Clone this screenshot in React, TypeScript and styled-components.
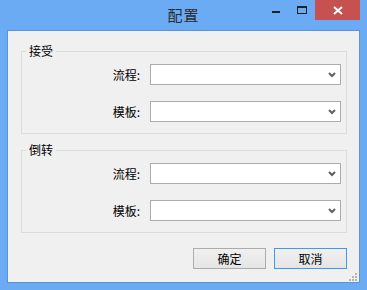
import React from 'react';
import styled, { createGlobalStyle } from "styled-components";

const GlobalStyle = createGlobalStyle`
  html, body { margin: 0; padding: 0; }
  body {
    font-family: "Noto Sans CJK SC", "Liberation Sans", sans-serif;
    font-size: 12px;
    color: #000;
  }
`;

const Window = styled.div`
  width: 367px;
  height: 290px;
  box-sizing: border-box;
  background: #6aabf4;
  display: flex;
  flex-direction: column;
  padding: 0 7px 7px 7px;
`;

const TitleBar = styled.div`
  height: 30px;
  display: grid;
  grid-template-columns: 1fr auto 1fr;
  align-items: start;
  flex-shrink: 0;
`;

const Title = styled.div`
  grid-column: 2;
  font-size: 15px;
  line-height: 30px;
  margin-top: 0px;
  color: #2b2b2b;
  letter-spacing: 1px;
`;

const Controls = styled.div`
  grid-column: 3;
  justify-self: end;
  display: flex;
  height: 20px;
`;

const CtlButton = styled.div<{ $w: number; $close?: boolean }>`
  width: ${p => p.$w}px;
  height: 20px;
  display: flex;
  align-items: center;
  justify-content: center;
  background: ${p => (p.$close ? "#c75050" : "transparent")};
`;

const Frame = styled.div`
  flex: 1;
  border: 1px solid #5a93d8;
  background: #f0f0f0;
  display: flex;
  flex-direction: column;
  padding: 20px 12px 0 13px;
  position: relative;
`;

const Group = styled.div<{ $gap?: number }>`
  border: 1px solid #dcdcdc;
  margin-top: ${p => p.$gap ?? 0}px;
  height: 81px;
`;

const Caption = styled.div`
  width: fit-content;
  margin: -8px 0 0 4px;
  padding: 0 3px;
  background: #f0f0f0;
  line-height: 14px;
  height: 14px;
`;

const Rows = styled.div`
  display: grid;
  grid-template-columns: 1fr 191px;
  column-gap: 10px;
  row-gap: 16px;
  padding: 6px 5px 0 0;
  align-items: center;
`;

const Label = styled.div`
  text-align: right;
  line-height: 21px;
`;

const Combo = styled.div`
  height: 21px;
  box-sizing: border-box;
  border: 1px solid #acacac;
  background: #fff;
  display: flex;
  align-items: center;
  justify-content: flex-end;
  padding-right: 4px;
`;

const Footer = styled.div`
  display: flex;
  justify-content: flex-end;
  gap: 8px;
  margin-top: 15px;
`;

const Button = styled.div<{ $focused?: boolean }>`
  width: 73px;
  height: 21px;
  box-sizing: border-box;
  border: 1px solid ${p => (p.$focused ? "#3c9af0" : "#acacac")};
  background: linear-gradient(#f0f0f0, #e5e5e5);
  display: flex;
  align-items: center;
  justify-content: center;
  line-height: 19px;
`;

const Grip = styled.svg`
  position: absolute;
  right: 1px;
  bottom: 1px;
`;

const Arrow = () => (
  <svg width="8" height="6" viewBox="0 0 8 6">
    <path d="M1 1 L4 4 L7 1" fill="none" stroke="#606060" strokeWidth="2" />
  </svg>
);

const Field = ({ label }: { label: string }) => (
  <>
    <Label>{label}</Label>
    <Combo><Arrow /></Combo>
  </>
);

const App = () => {
  return (
    <>
      <GlobalStyle />
      <Window>
        <TitleBar>
          <Title>配置</Title>
          <Controls>
            <CtlButton $w={27}>
              <svg width="8" height="8" viewBox="0 0 8 8">
                <rect x="0" y="5" width="8" height="2" fill="#222" />
              </svg>
            </CtlButton>
            <CtlButton $w={26}>
              <svg width="10" height="8" viewBox="0 0 10 8">
                <rect x="0.5" y="1" width="9" height="6.5" fill="none" stroke="#222" strokeWidth="1" />
                <rect x="0" y="0" width="10" height="2" fill="#222" />
              </svg>
            </CtlButton>
            <CtlButton $w={45} $close>
              <svg width="10" height="9" viewBox="0 0 10 9">
                <path d="M1 1 L9 8 M9 1 L1 8" stroke="#fff" strokeWidth="2" />
              </svg>
            </CtlButton>
          </Controls>
        </TitleBar>
        <Frame>
          <Group>
            <Caption>接受</Caption>
            <Rows>
              <Field label="流程:" />
              <Field label="模板:" />
            </Rows>
          </Group>
          <Group $gap={16}>
            <Caption>倒转</Caption>
            <Rows>
              <Field label="流程:" />
              <Field label="模板:" />
            </Rows>
          </Group>
          <Footer>
            <Button>确定</Button>
            <Button $focused>取消</Button>
          </Footer>
          <Grip width="9" height="8" viewBox="0 0 9 8">
            <g fill="#b4b4b4">
              <rect x="6" y="0" width="2" height="2" />
              <rect x="3" y="3" width="2" height="2" />
              <rect x="6" y="3" width="2" height="2" />
              <rect x="0" y="6" width="2" height="2" />
              <rect x="3" y="6" width="2" height="2" />
              <rect x="6" y="6" width="2" height="2" />
            </g>
          </Grip>
        </Frame>
      </Window>
    </>
  );
};

export default App;
